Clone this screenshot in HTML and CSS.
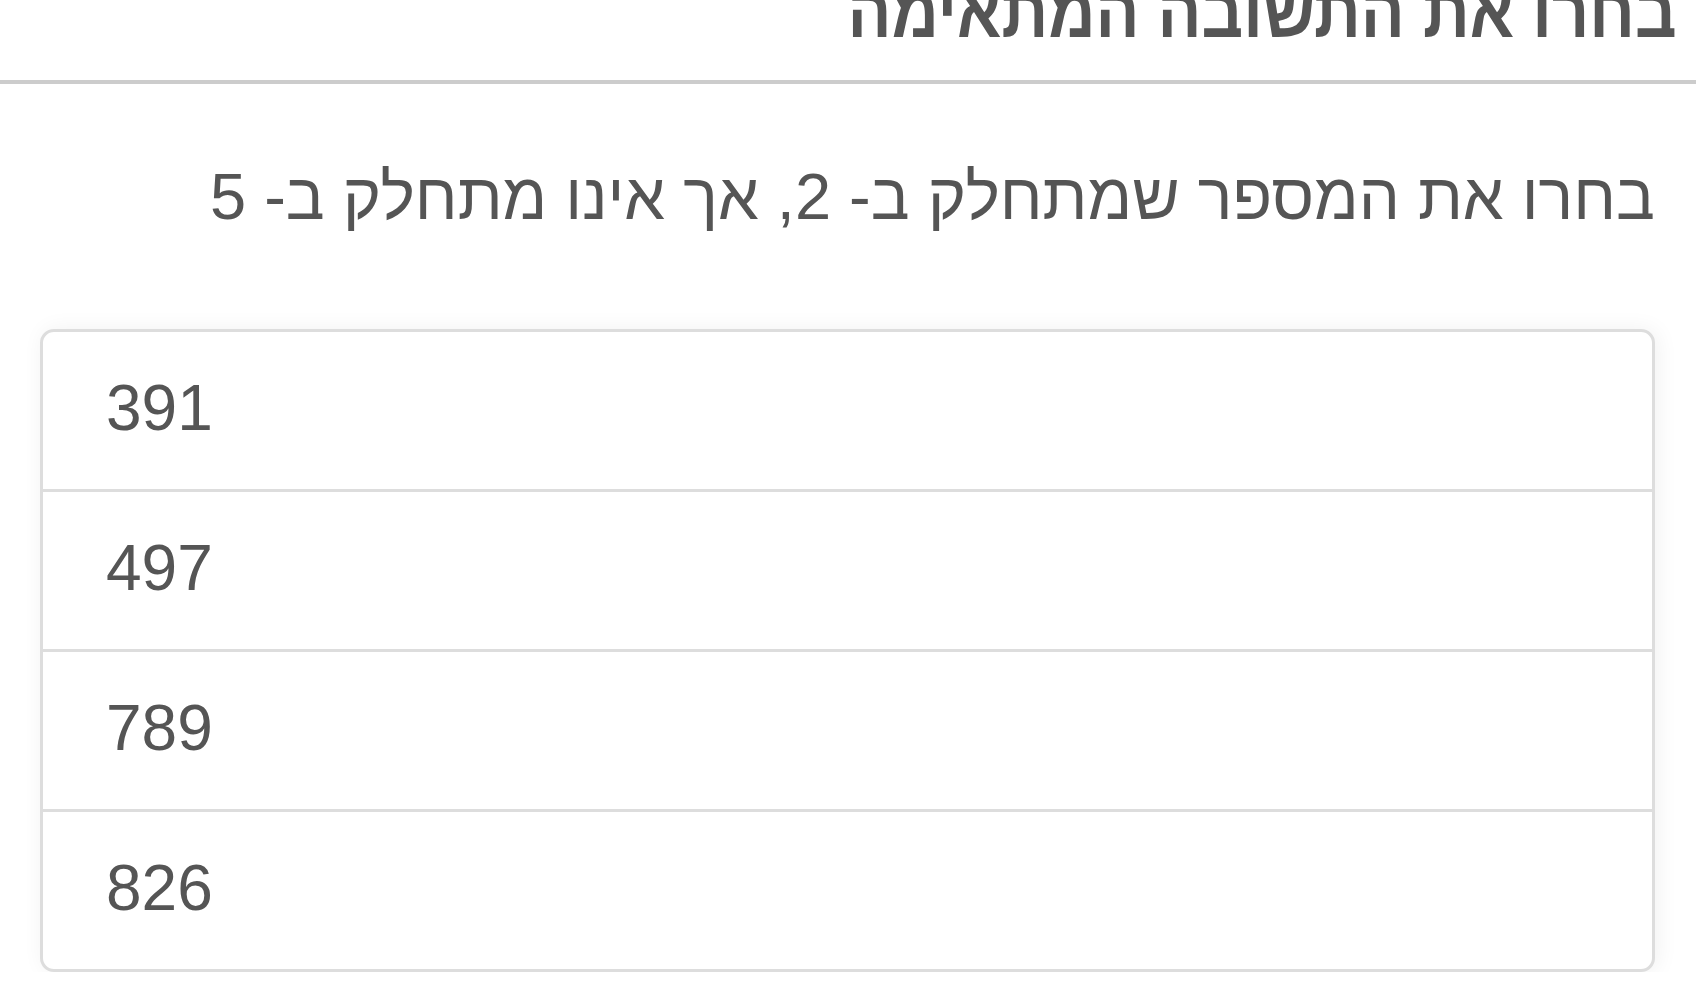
FILE: index.html
```html
<!DOCTYPE html>
<html lang="he" dir="rtl">
<head>
<meta charset="utf-8">
<title>שאלה</title>
<link rel="stylesheet" href="styles.css">
</head>
<body>
<header class="quiz-head">
  <h2 class="quiz-title">בחרו את התשובה המתאימה</h2>
</header>
<main class="quiz-body">
  <p class="question">בחרו את המספר שמתחלק ב- 2, אך אינו מתחלק ב- 5</p>
  <ul class="answers">
    <li class="answer">391</li>
    <li class="answer">497</li>
    <li class="answer">789</li>
    <li class="answer">826</li>
  </ul>
</main>
</body>
</html>
```

FILE: styles.css
```css
html, body {
  margin: 0;
  padding: 0;
  background: #ffffff;
}

body {
  font-family: "Liberation Sans", Arial, sans-serif;
  color: #555555;
  overflow: hidden;
}

.quiz-head {
  border-bottom: 4px solid #cccccc;
  height: 80px;
  overflow: hidden;
}

/* heading set in a tall, slightly narrowed bold face */
.quiz-title {
  margin: -25px 0 0 0;
  padding: 0 22px 0 0;
  font-size: 74px;
  font-weight: bold;
  line-height: 1;
  color: #555555;
  transform: scaleX(0.88);
  transform-origin: right center;
}

.quiz-body {
  padding: 0 41px 0 40px;
}

.question {
  margin: 0;
  padding-top: 73px;
  font-size: 65px;
  line-height: 80px;
}

.answers {
  direction: ltr;
  list-style: none;
  margin: 92px 0 0 0;
  padding: 0;
  border: 3px solid #dddddd;
  border-radius: 14px;
  box-shadow: 3px 0 22px rgba(0, 0, 0, 0.06);
  background: #ffffff;
}

.answer {
  display: flex;
  align-items: center;
  height: 160px;
  padding: 0 0 6px 63px;
  box-sizing: border-box;
  font-size: 64px;
  border-top: 3px solid #dddddd;
}

.answer:first-child {
  border-top: none;
  height: 157px;
}
```
